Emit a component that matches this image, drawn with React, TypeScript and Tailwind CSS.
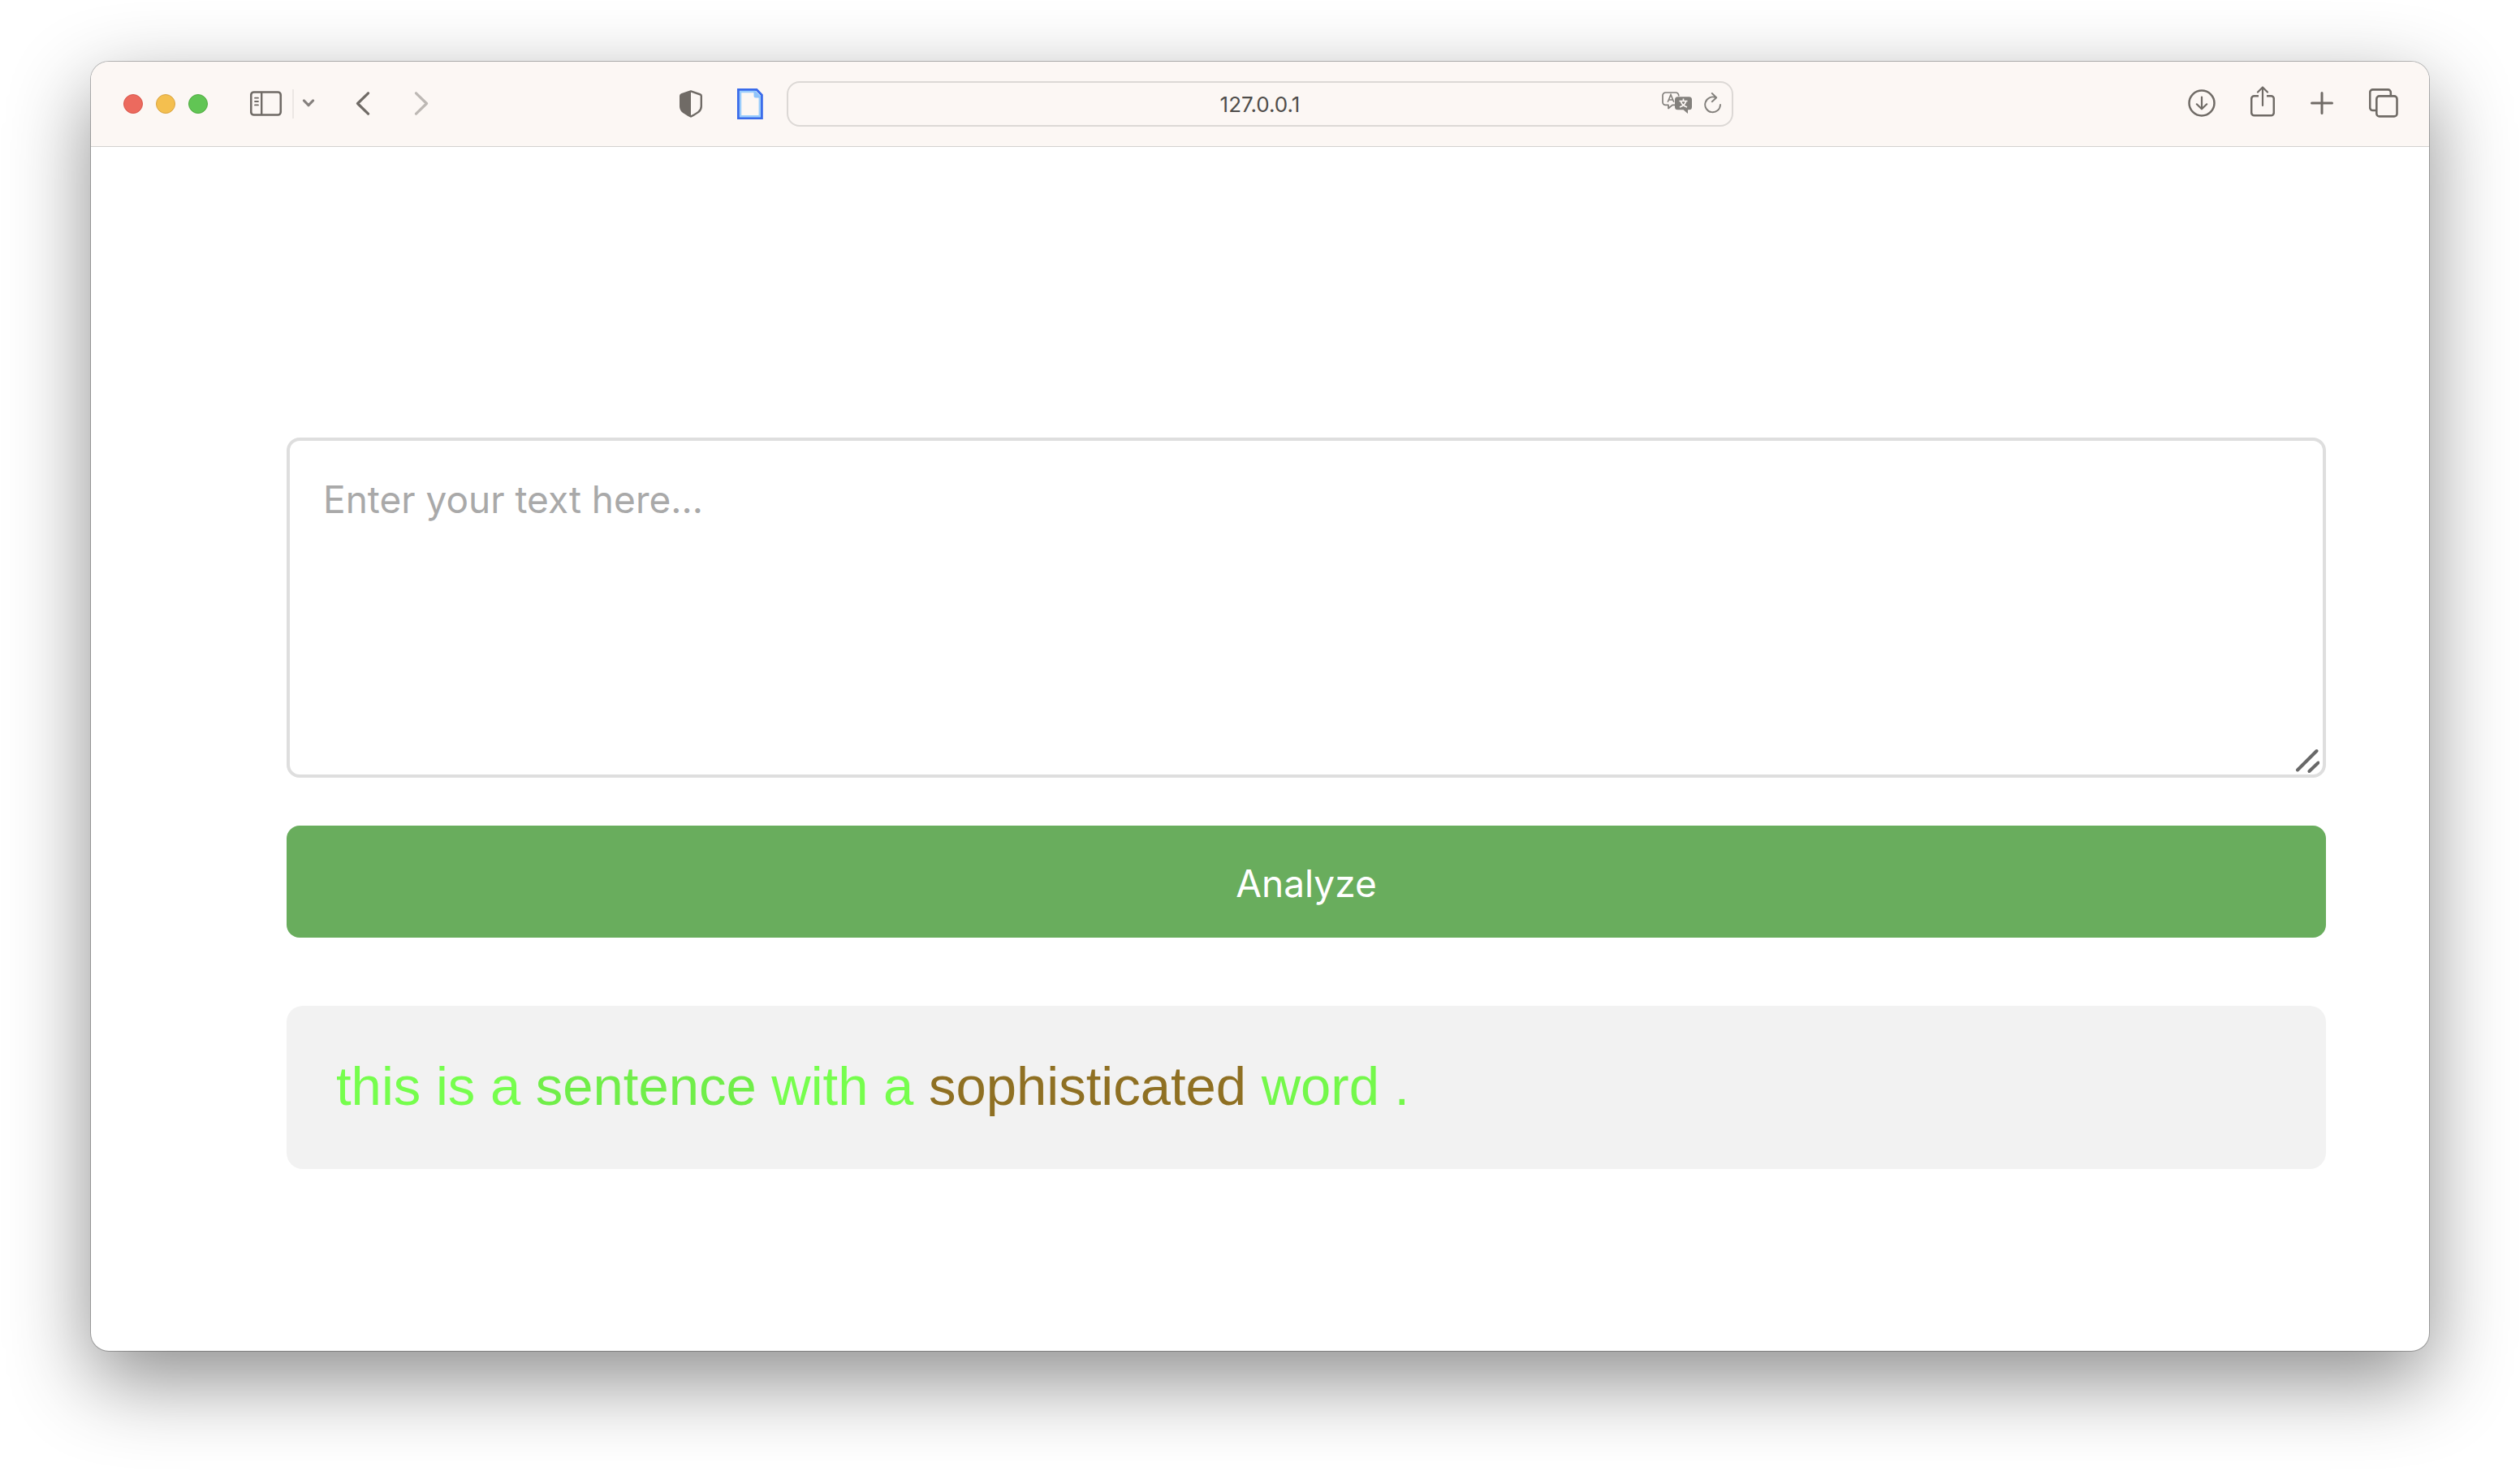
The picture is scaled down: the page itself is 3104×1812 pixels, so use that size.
import { useState } from "react";

const ink = "#706b66";

function SidebarIcon() {
  return (
    <svg width="40" height="32" viewBox="0 0 40 32" fill="none" stroke={ink} strokeLinecap="round">
      <rect x="1.25" y="1.5" width="36.5" height="28" rx="3.5" strokeWidth="2.6" />
      <path d="M14.2 2v27.5" strokeWidth="2.4" strokeLinecap="butt" />
      <path d="M6 8.700h4M6 13h4M6 17.400h4" strokeWidth="1.8" />
    </svg>
  );
}

function ChevronDown() {
  return (
    <svg width="16" height="12" viewBox="0 0 16 12" fill="none" stroke="#86817e" strokeWidth="3.2" strokeLinecap="round" strokeLinejoin="round">
      <path d="M2.5 2 8 7.700l5.500-5.700" />
    </svg>
  );
}

function ChevronLeft() {
  return (
    <svg width="18" height="30" viewBox="0 0 18 30" fill="none" stroke={ink} strokeWidth="3.2" strokeLinecap="round" strokeLinejoin="round">
      <path d="M15.500 1.800 2.500 14.500l13 12.700" />
    </svg>
  );
}

function ChevronRight() {
  return (
    <svg width="18" height="30" viewBox="0 0 18 30" fill="none" stroke="#bdb8b4" strokeWidth="3.2" strokeLinecap="round" strokeLinejoin="round">
      <path d="M2.500 1.800l13 12.700-13 12.700" />
    </svg>
  );
}

function ShieldIcon() {
  return (
    <svg width="28" height="34" viewBox="0 0 28 34" fill="none">
      <path d="M14 1.400 2.200 5.500Q1.200 6 1.200 7.200V20c0 6 5 8.500 12.800 12.500C21.800 28.500 26.800 26 26.800 20V7.200q0-1.200-1-1.700z" stroke={ink} strokeWidth="2.400" strokeLinejoin="round" />
      <path d="M14 1 2 5.300Q1 6 1 7.200V20c0 6 5 8.500 13 12.600z" fill={ink} />
    </svg>
  );
}

function PageIcon() {
  return (
    <svg width="32" height="38" viewBox="0 0 32 38" fill="none">
      <path d="M1.500 1.500H24L30.300 8v28.500H1.500z" fill="#fcf7f4" stroke="#3a6bea" strokeWidth="3" />
      <path d="M4 4H22l5.800 5.800v24.400H4z" stroke="#9bcdfc" strokeWidth="2.500" />
      <path d="M20.500 3v6q0 2.500 2.500 2.500h6L24 5z" fill="#8fc4fb" />
    </svg>
  );
}

function TranslateIcon() {
  return (
    <svg width="38" height="28" viewBox="0 0 38 28" fill="none">
      <path d="M16 16.300h-3l-5 4.200v-4.200H4.500A3.500 3.500 0 0 1 1 12.800V4.500A3.500 3.500 0 0 1 4.500 1h12.700a3.500 3.500 0 0 1 3.500 3.500v1" stroke="#83807c" strokeWidth="1.700" strokeLinejoin="round" />
      <path d="M7.200 12.800 11 3.600l3.800 9.200M8.400 10h5.200" stroke="#83807c" strokeWidth="1.600" />
      <path d="M19.500 6.300h14a3.500 3.500 0 0 1 3.500 3.500v9a3.500 3.500 0 0 1-3.500 3.500H32V27l-5.500-4.700h-7a3.500 3.500 0 0 1-3.500-3.500v-9a3.500 3.500 0 0 1 3.500-3.500z" fill="#83807c" />
      <path d="M26.500 8.500v2.500M21.500 11.500h10M23.300 11.800c1.200 3.700 3.700 6 7.700 7.200M29.700 11.800c-1.200 3.700-3.700 6-7.700 7.200" stroke="#fcf7f4" strokeWidth="1.700" />
    </svg>
  );
}

function ReloadIcon() {
  return (
    <svg width="22" height="26" viewBox="0 0 22 26" fill="none" stroke="#83807c" strokeWidth="1.900" strokeLinecap="round" strokeLinejoin="round">
      <path d="M20 15A9.400 9.400 0 1 1 14.500 6.300M9.800 1l5.400 5.200-5.400 5" />
    </svg>
  );
}

function DownloadIcon() {
  return (
    <svg width="34" height="34" viewBox="0 0 34 34" fill="none" stroke={ink} strokeWidth="2.500" strokeLinecap="round" strokeLinejoin="round">
      <circle cx="17" cy="17" r="15.500" />
      <path d="M17 9.500v14.500M10.800 18.300 17 24.300l6.200-6" strokeWidth="2.200" />
    </svg>
  );
}

function ShareIcon() {
  return (
    <svg width="30" height="38" viewBox="0 0 30 38" fill="none" stroke={ink} strokeWidth="2.500" strokeLinecap="round" strokeLinejoin="round">
      <path d="M10 12.200H4.700a3.500 3.500 0 0 0-3.500 3.500v17.100a3.500 3.500 0 0 0 3.500 3.500h20.600a3.500 3.500 0 0 0 3.500-3.500V15.700a3.500 3.500 0 0 0-3.500-3.500H20" strokeLinecap="butt" />
      <path d="M15 24V2M9 7.500l6-6 6 6" strokeWidth="2.200" />
    </svg>
  );
}

function PlusIcon() {
  return (
    <svg width="28" height="28" viewBox="0 0 28 28" fill="none" stroke={ink} strokeWidth="3" strokeLinecap="round">
      <path d="M14 1.500v25M1.500 14h25" />
    </svg>
  );
}

function TabsIcon() {
  return (
    <svg width="36" height="36" viewBox="0 0 36 36" fill="none" stroke={ink} strokeWidth="2.600" strokeLinejoin="round">
      <path d="M9.300 27H4.700a3.500 3.500 0 0 1-3.500-3.500V4.900a3.500 3.500 0 0 1 3.500-3.500h18.600a3.500 3.500 0 0 1 3.500 3.500v4.500" />
      <rect x="9.300" y="9.400" width="25.200" height="25" rx="3.500" />
    </svg>
  );
}

const words = [
  { text: "this is a", color: "text-[#76fe4d]" },
  { text: "sentence", color: "text-[#70ee49]" },
  { text: "with a", color: "text-[#76fe4d]" },
  { text: "sophisticated", color: "text-[#8f7023]" },
  { text: "word", color: "text-[#74f84b]" },
  { text: ".", color: "text-[#74f84b]" },
];

export default function App() {
  const [value, setValue] = useState("");
  return (
    <div className="bg-white px-[112px] pt-[76px] pb-[148px] font-['Inter',sans-serif]">
      <div className="overflow-hidden rounded-[22px] bg-white shadow-[0_0_0_1px_rgba(0,0,0,0.25),0_36px_100px_rgba(0,0,0,0.45)]">
        <header className="grid h-[105px] grid-cols-[1fr_minmax(0,1166px)_1fr] items-center border-b border-[#d3d1d0] bg-[#fcf7f4]">
          <div className="flex items-center pr-[29px] pl-10">
            <div className="flex gap-4">
              <button aria-label="Close" className="size-6 rounded-full border border-[#d8554a] bg-[#ec6a5e]" />
              <button aria-label="Minimize" className="size-6 rounded-full border border-[#d9a441] bg-[#f4bf4f]" />
              <button aria-label="Zoom" className="size-6 rounded-full border border-[#50aa41] bg-[#61c554]" />
            </div>
            <button aria-label="Show sidebar" className="ml-[52px]"><SidebarIcon /></button>
            <div className="ml-3 h-9 w-[2px] bg-[#ece7e4]" />
            <button aria-label="Tab groups" className="ml-[10px]"><ChevronDown /></button>
            <button aria-label="Back" className="ml-[50px]"><ChevronLeft /></button>
            <button aria-label="Forward" className="ml-[54px]"><ChevronRight /></button>
            <button aria-label="Privacy report" className="ml-auto"><ShieldIcon /></button>
            <button aria-label="Page" className="ml-[43px]"><PageIcon /></button>
          </div>
          <div className="grid h-14 grid-cols-[1fr_auto_1fr] items-center rounded-2xl border-2 border-[#dcd8d5] px-3">
            <span className="col-start-2 pt-[2px] text-[26px] leading-8 text-[#4f4d4b]">127.0.0.1</span>
            <div className="flex items-center justify-end gap-[14px] pb-[2px]">
              <button aria-label="Translate"><TranslateIcon /></button>
              <button aria-label="Reload"><ReloadIcon /></button>
            </div>
          </div>
          <div className="flex items-center justify-end pr-[38px] pb-[2px]">
            <button aria-label="Downloads"><DownloadIcon /></button>
            <button aria-label="Share" className="mb-1 ml-[43px]"><ShareIcon /></button>
            <button aria-label="New tab" className="ml-11"><PlusIcon /></button>
            <button aria-label="Tab overview" className="ml-11"><TabsIcon /></button>
          </div>
        </header>
        <main className="flex flex-col pt-[358px] pr-[127px] pb-[224px] pl-[241px]">
          <div className="relative flex">
            <textarea
              aria-label="Text to analyze"
              placeholder="Enter your text here..."
              value={value}
              onChange={(e) => setValue(e.target.value)}
              className="h-[419px] w-full resize-none rounded-2xl border-4 border-[#dedede] bg-white px-[41px] py-11 text-[46px] leading-[56px] text-black outline-none placeholder:text-[#a9a9a9]"
            />
            <svg className="pointer-events-none absolute right-2 bottom-1.5" width="30" height="30" viewBox="0 0 30 30" fill="none" stroke="#686868" strokeWidth="4" strokeLinecap="round">
              <path d="M3 26.500 26.500 3M17.500 28 28.500 17.500" />
            </svg>
          </div>
          <button className="mt-[59px] h-[138px] rounded-2xl bg-[#69ad5d] pt-1 text-[46px] leading-[56px] text-white">Analyze</button>
          <p className="mt-[84px] rounded-[20px] bg-[#f2f2f2] px-[61px] pt-[58px] pb-[62px] font-['Liberation_Sans',Arial,sans-serif] text-[67px] leading-[81px]">
            {words.map((w, i) => (
              <span key={i} className={w.color}>{w.text} </span>
            ))}
          </p>
        </main>
      </div>
    </div>
  );
}
